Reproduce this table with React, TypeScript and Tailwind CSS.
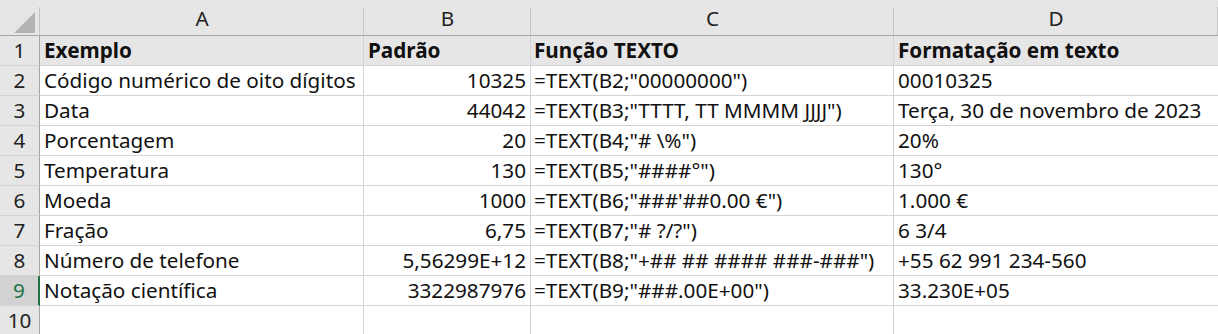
import React from "react";

const rows: { a: string; b: string; c: string; d: string }[] = [
  { a: "Exemplo", b: "Padrão", c: "Função TEXTO", d: "Formatação em texto" },
  { a: "Código numérico de oito dígitos", b: "10325", c: '=TEXT(B2;"00000000")', d: "00010325" },
  { a: "Data", b: "44042", c: '=TEXT(B3;"TTTT, TT MMMM JJJJ")', d: "Terça, 30 de novembro de 2023" },
  { a: "Porcentagem", b: "20", c: '=TEXT(B4;"# \\%")', d: "20%" },
  { a: "Temperatura", b: "130", c: '=TEXT(B5;"####°")', d: "130°" },
  { a: "Moeda", b: "1000", c: "=TEXT(B6;\"###'##0.00 €\")", d: "1.000 €" },
  { a: "Fração", b: "6,75", c: '=TEXT(B7;"# ?/?")', d: "6 3/4" },
  { a: "Número de telefone", b: "5,56299E+12", c: '=TEXT(B8;"+## ## #### ###-###")', d: "+55 62 991 234-560" },
  { a: "Notação científica", b: "3322987976", c: '=TEXT(B9;"###.00E+00")', d: "33.230E+05" },
  { a: "", b: "", c: "", d: "" },
];

const cols = "grid-cols-[40px_324px_167px_363px_324px]";

export default function App() {
  return (
    <div
      className="w-[1218px] h-[334px] overflow-hidden bg-white text-[20.7px] text-[#111] leading-none"
      style={{ fontFamily: '"Noto Sans", "Open Sans", sans-serif' }}
    >
      {/* column header */}
      <div className={`grid ${cols} h-[36px] bg-[#e6e6e6] border-b border-[#a6a6a6]`}>
        <div className="relative flex items-end">
          <svg width="40" height="35" className="absolute left-0 top-0">
            <polygon points="14,33 35,12 35,33" fill="#b4b4b4" />
          </svg>
          <div className="absolute right-0 top-[7px] bottom-0 w-px bg-[#c6c6c6]" />
        </div>
        {["A", "B", "C", "D"].map((l) => (
          <div key={l} className="relative flex items-center justify-center text-[#222] pt-[2px]">
            {l}
            <div className="absolute right-0 top-[7px] bottom-0 w-px bg-[#c6c6c6]" />
          </div>
        ))}
      </div>
      {rows.map((r, i) => {
        const n = i + 1;
        const header = n === 1;
        const sel = n === 9;
        return (
          <div
            key={n}
            className={`grid ${cols} h-[30px] ${header ? "bg-[#e6e6e6]" : "bg-white"}`}
          >
            <div
              className={`flex items-center justify-center border-b border-[#d4d4d4] ${
                sel
                  ? "bg-[#d2d2d2] text-[#217346] border-r-2 border-r-[#217346]"
                  : "bg-[#e6e6e6] text-[#222] border-r border-r-[#a6a6a6]"
              }`}
            >
              {n}
            </div>
            <div
              className={`flex items-center pl-[4px] border-r border-b border-[#d4d4d4] whitespace-nowrap overflow-hidden ${
                header ? "font-bold" : ""
              }`}
            >
              {r.a}
            </div>
            <div
              className={`flex items-center border-r border-b border-[#d4d4d4] whitespace-nowrap overflow-hidden ${
                header ? "font-bold justify-start pl-[4px]" : "justify-end pr-[4px]"
              }`}
            >
              {r.b}
            </div>
            <div
              className={`flex items-center pl-[3px] border-r border-b border-[#d4d4d4] whitespace-nowrap overflow-hidden ${
                header ? "font-bold" : ""
              }`}
            >
              {r.c}
            </div>
            <div
              className={`flex items-center pl-[4px] border-b border-[#d4d4d4] whitespace-nowrap overflow-hidden ${
                header ? "font-bold" : ""
              }`}
            >
              {r.d}
            </div>
          </div>
        );
      })}
    </div>
  );
}
